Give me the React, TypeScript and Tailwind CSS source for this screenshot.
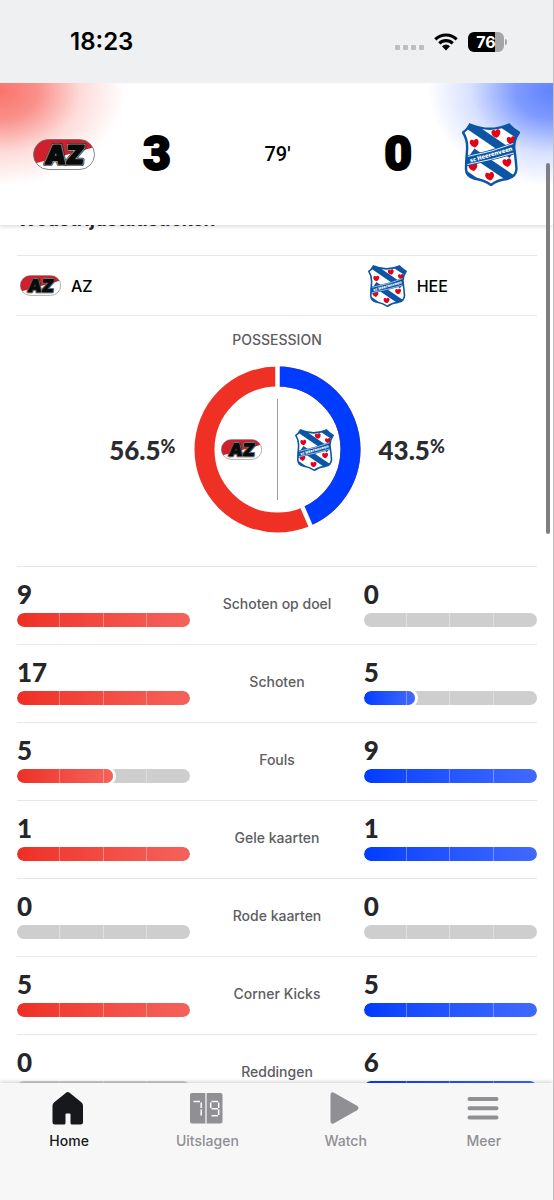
import { useId } from "react";
import type { ReactNode } from "react";

type Stat = { label: string; home: number; away: number };

const stats: Stat[] = [
  { label: "Schoten op doel", home: 9, away: 0 },
  { label: "Schoten", home: 17, away: 5 },
  { label: "Fouls", home: 5, away: 9 },
  { label: "Gele kaarten", home: 1, away: 1 },
  { label: "Rode kaarten", home: 0, away: 0 },
  { label: "Corner Kicks", home: 5, away: 5 },
  { label: "Reddingen", home: 0, away: 6 },
];

const possession = { home: 56.5, away: 43.5 };

function AzLogo({ className }: { className: string }) {
  const id = useId();
  return (
    <svg viewBox="0 0 62 31" className={className} role="img" aria-label="AZ">
      <clipPath id={id}>
        <rect x="0.5" y="0.5" width="61" height="30" rx="15" />
      </clipPath>
      <g clipPath={`url(#${id})`}>
        <rect width="62" height="31" fill="#fff" />
        <path d="M0 0H62V8L0 25Z" fill="#cf202b" />
      </g>
      <rect x="0.5" y="0.5" width="61" height="30" rx="15" fill="none" stroke="#6b6b6b" strokeWidth="0.8" />
      <g
        transform="translate(11.5 25) skewX(-6)"
        fontFamily="Inter, sans-serif"
        fontWeight="900"
        fontSize="26"
        strokeLinejoin="round"
      >
        <text stroke="#222" strokeWidth="4">AZ</text>
        <text stroke="#a9a9a9" strokeWidth="2.8">AZ</text>
        <text fill="#0a0a0a" stroke="#0a0a0a" strokeWidth="1.4">AZ</text>
      </g>
    </svg>
  );
}

const shield =
  "M8 1.5Q28 10 47 1.5Q51 6 57 9.5Q51 18 52.5 27Q54 38 54.5 46Q54 54 45 56Q35 57 29 62Q22 57 12 55.5Q4 53 4 46Q4 38 5 28Q6 17 1 9.5Q5 7 8 1.5Z";

const hearts = [
  [12.3, 20],
  [34, 10.3],
  [49.3, 17.3],
  [11, 43.5],
  [27.7, 53],
  [45, 39.5],
];

function HeerenveenLogo({ className }: { className: string }) {
  const id = useId();
  return (
    <svg viewBox="0 0 58 63" className={className} role="img" aria-label="sc Heerenveen">
      <clipPath id={id}>
        <path d={shield} />
      </clipPath>
      <g clipPath={`url(#${id})`}>
        <rect width="58" height="63" fill="#fff" />
        <g stroke="#0b55a4" strokeWidth="8.5">
          <path d="M6 1.5L50 31.5" />
          <path d="M10 29L58 61.5" />
          <path d="M38 -1L62 15" />
          <path d="M-4 47L22 65" />
        </g>
        {hearts.map(([x, y]) => (
          <path
            key={`${x}-${y}`}
            transform={`translate(${x} ${y}) rotate(-8)`}
            d="M0 4.5C-3 3.5 -5 0.5 -4.3 -2C-3.5 -4.3 -0.8 -4 0 -2.3C0.8 -4 3.5 -4.3 4.3 -2C5 0.5 3 3.5 0 4.5Z"
            fill="#e4021b"
          />
        ))}
        {/* Name banner with its white piping */}
        <path d="M1 33Q30 28 57 17V30Q30 38 1 44Z" fill="#0b55a4" />
        <path d="M1 34.5Q30 29.500 57 18.500M1 42.500Q30 37 57 28.500" stroke="#fff" strokeWidth="0.9" fill="none" />
      </g>
      <path d={shield} fill="none" stroke="#0b55a4" strokeWidth="2.4" />
      <text
        transform="translate(8.500 39.500) rotate(-16)"
        fontFamily="'Open Sans', sans-serif"
        fontWeight="800"
        fontSize="5.8"
        fill="#fff"
      >
        sc Heerenveen
      </text>
    </svg>
  );
}

function StatusBar() {
  return (
    <div className="relative z-20 flex h-[83px] shrink-0 items-center justify-between bg-[#eff0f2] pr-[46px] pl-[70px]">
      <span className="text-2xl font-semibold text-black">18:23</span>
      <div className="flex items-center gap-2.5">
        <span className="flex gap-[3px] pt-3">
          {[0, 1, 2, 3].map((dot) => (
            <span key={dot} className="size-[5px] rounded-[1px] bg-[#bdbec1]" />
          ))}
        </span>
        <svg viewBox="0 0 24 18" className="h-[18px] w-6" role="img" aria-label="Wifi">
          <g fill="none" stroke="#000" strokeWidth="3.2">
            <path d="M1.3 6.300A15.500 15.500 0 0 1 22.700 6.300" />
            <path d="M5.3 10.400A9.700 9.700 0 0 1 18.700 10.400" />
          </g>
          <path d="M8 13.300A5.600 5.600 0 0 1 16 13.300L12 17.500Z" fill="#000" />
        </svg>
        <div className="flex items-center gap-px">
          <div className="flex h-5 w-9 items-center justify-center overflow-hidden rounded-md bg-[linear-gradient(90deg,#000_76%,#a5a5a7_76%)] text-base font-bold text-white">
            76
          </div>
          <span className="h-1.5 w-0.5 rounded-r-full bg-[#a5a5a7]" />
        </div>
      </div>
    </div>
  );
}

function Score({ value }: { value: number }) {
  return (
    <span className="font-['Liberation_Sans_Narrow','Roboto',sans-serif] text-[48px] leading-none font-black text-black [-webkit-text-stroke:2px_#000]">
      {value}
    </span>
  );
}

function MatchHeader() {
  return (
    <header className="relative z-10 flex h-[142px] shrink-0 items-center justify-between bg-white bg-[radial-gradient(ellipse_125px_95px_at_0_8px,#f8746c_0%,#f8746ccc_30%,#f8746c40_65%,transparent_100%),radial-gradient(ellipse_125px_95px_at_100%_8px,#5f82ff_0%,#5f82ffcc_30%,#5f82ff40_65%,transparent_100%)] px-[33px] shadow-[0_1px_5px_rgba(0,0,0,0.18)]">
      <div className="flex items-center gap-12">
        <AzLogo className="h-[31px] w-[62px]" />
        <Score value={3} />
      </div>
      <span className="font-[Roboto] text-xl font-medium text-black">79'</span>
      <div className="flex items-center gap-[50px]">
        <Score value={0} />
        <HeerenveenLogo className="h-[63px] w-[58px]" />
      </div>
    </header>
  );
}

function Percentage({ value }: { value: number }) {
  return (
    <span className="flex items-start font-[Lato] text-[26px] leading-7 font-black text-[#2b2c2f]">
      {value}
      <span className="text-lg leading-5">%</span>
    </span>
  );
}

function PossessionChart() {
  const radius = 73;
  const around = 2 * Math.PI * radius;
  const awayArc = (possession.away / 100) * around;
  const awayAngle = (possession.away / 100) * 2 * Math.PI;

  return (
    <section className="border-t border-[#e6e7e8] pt-3.5 pb-[33px]">
      <h3 className="text-center text-sm leading-5 font-medium text-[#5c5d61]">POSSESSION</h3>
      <div className="mt-4 flex items-center justify-center gap-[18px]">
        <Percentage value={possession.home} />
        <div className="relative">
          <svg viewBox="0 0 167 167" className="size-[167px]" role="img" aria-label="Possession">
            <g transform="rotate(-90 83.5 83.5)" fill="none" strokeWidth="20">
              <circle cx="83.5" cy="83.5" r={radius} stroke="#ee3124" />
              <circle cx="83.5" cy="83.5" r={radius} stroke="#003cff" strokeDasharray={`${awayArc} ${around}`} />
            </g>
            <g stroke="#fff" strokeWidth="4.5">
              <path d="M83.5 0V22" />
              <line
                x1={83.5 + 60 * Math.sin(awayAngle)}
                y1={83.5 - 60 * Math.cos(awayAngle)}
                x2={83.5 + 86 * Math.sin(awayAngle)}
                y2={83.5 - 86 * Math.cos(awayAngle)}
              />
            </g>
            <path d="M83.5 33V134" stroke="#9b9c9f" />
          </svg>
          <div className="absolute inset-0 flex items-center justify-between px-[27px]">
            <AzLogo className="h-[21px] w-[41px]" />
            <HeerenveenLogo className="h-[42px] w-[39px]" />
          </div>
        </div>
        <Percentage value={possession.away} />
      </div>
    </section>
  );
}

function StatBar({ value, share, fill }: { value: number; share: number; fill: string }) {
  return (
    <div>
      <div className="font-[Lato] text-[26px] leading-7 font-black text-[#25262a]">{value}</div>
      <div className="relative mt-[5px] h-3.5 overflow-hidden rounded-full bg-[#cecece]">
        {share > 0 && (
          <div className={`h-full rounded-full shadow-[0_0_0_3px_#fff] ${fill}`} style={{ width: `${share * 100}%` }} />
        )}
        <div className="absolute inset-0 grid grid-cols-4 divide-x divide-white/35">
          <span />
          <span />
          <span />
          <span />
        </div>
      </div>
    </div>
  );
}

function StatRow({ label, home, away }: Stat) {
  const top = Math.max(home, away, 1);
  return (
    <li className="grid grid-cols-3 border-t border-[#e6e7e8] pt-[13px] pb-[17px]">
      <StatBar value={home} share={home / top} fill="bg-linear-to-r from-[#ee2e24] to-[#f5625b]" />
      <span className="pt-3.5 text-center text-sm leading-5 font-medium text-[#5c5d61]">{label}</span>
      <StatBar value={away} share={away / top} fill="bg-linear-to-r from-[#003cff] to-[#4069ff]" />
    </li>
  );
}

function TabLink({ label, active = false, children }: { label: string; active?: boolean; children: ReactNode }) {
  return (
    <a
      href="#"
      aria-current={active ? "page" : undefined}
      className={`flex flex-1 flex-col items-center gap-1.5 ${active ? "text-[#17181b]" : "text-[#8f8f94]"}`}
    >
      <svg viewBox="0 0 34 34" className="size-[34px]" fill="currentColor" aria-hidden="true">
        {children}
      </svg>
      <span className="text-sm leading-5 font-medium">{label}</span>
    </a>
  );
}

function TabBar() {
  return (
    <nav className="relative z-10 flex h-[117px] shrink-0 items-start bg-[#f7f7f7] pt-2 shadow-[0_-1px_4px_rgba(0,0,0,0.2)]">
      <TabLink label="Home" active>
        <path d="M14 1.8Q15.800 0.300 17.600 1.800L29.600 11.500Q31 12.800 31 14.500V31Q31 33.500 28.500 33.500H20Q18.500 33.500 18.500 32V23.500Q18.500 22.500 17.500 22.500H14.500Q13.500 22.500 13.500 23.500V32Q13.500 33.500 12 33.500H3Q0.500 33.500 0.500 31V14.500Q0.500 12.800 2 11.500Z" />
      </TabLink>
      <TabLink label="Uitslagen">
        <rect x="0" y="2" width="32.5" height="30.5" rx="2" />
        <path d="M16 2V32.500" stroke="#f7f7f7" strokeWidth="1.3" />
        <g fill="none" stroke="#f7f7f7" strokeWidth="1.6">
          <path d="M3.500 10.500H10M11.200 11.500V17M11.200 18.500V24.500" />
          <path d="M21.500 10.500H28M20.700 11.500V17M21.500 17.700H28M28.700 11.500V17M28.700 18.500V24M21.500 24.700H28" />
        </g>
      </TabLink>
      <TabLink label="Watch">
        <path d="M1.500 4Q1.500 0 5 1.800L28 14.800Q31 17 28 19.200L5 32.200Q1.500 34 1.500 30Z" />
      </TabLink>
      <TabLink label="Meer">
        <path d="M2.500 8H29.500M2.500 17.300H29.500M2.500 26.500H29.500" stroke="currentColor" strokeWidth="4" strokeLinecap="round" />
      </TabLink>
    </nav>
  );
}

export default function App() {
  return (
    <div className="relative flex h-screen flex-col overflow-hidden border-r border-[#bfbfc2] bg-white font-[Inter,sans-serif]">
      <StatusBar />
      <MatchHeader />

      <main className="min-h-0 flex-1 overflow-hidden pr-4 pl-[17px]">
        <h2 className="-mt-[19px] mb-[21px] text-[19px] leading-7 font-bold text-[#25262a]">Wedstrijdstatistieken</h2>

        <div className="grid h-[60px] grid-cols-3 items-center border-t border-[#e6e7e8] text-base font-medium text-black">
          <div className="flex items-center gap-2.5 pl-[3px]">
            <AzLogo className="h-[21px] w-[41px]" />
            AZ
          </div>
          <div className="col-start-3 flex items-center gap-2.5 pl-1">
            <HeerenveenLogo className="h-[42px] w-[39px]" />
            HEE
          </div>
        </div>

        <PossessionChart />

        <ul>
          {stats.map((stat) => (
            <StatRow key={stat.label} {...stat} />
          ))}
        </ul>
      </main>

      <TabBar />

      {/* Scroll indicator */}
      <div className="absolute top-[163px] right-[3px] z-20 h-[371px] w-1 rounded-full bg-[#7f7f81]" />
    </div>
  );
}
